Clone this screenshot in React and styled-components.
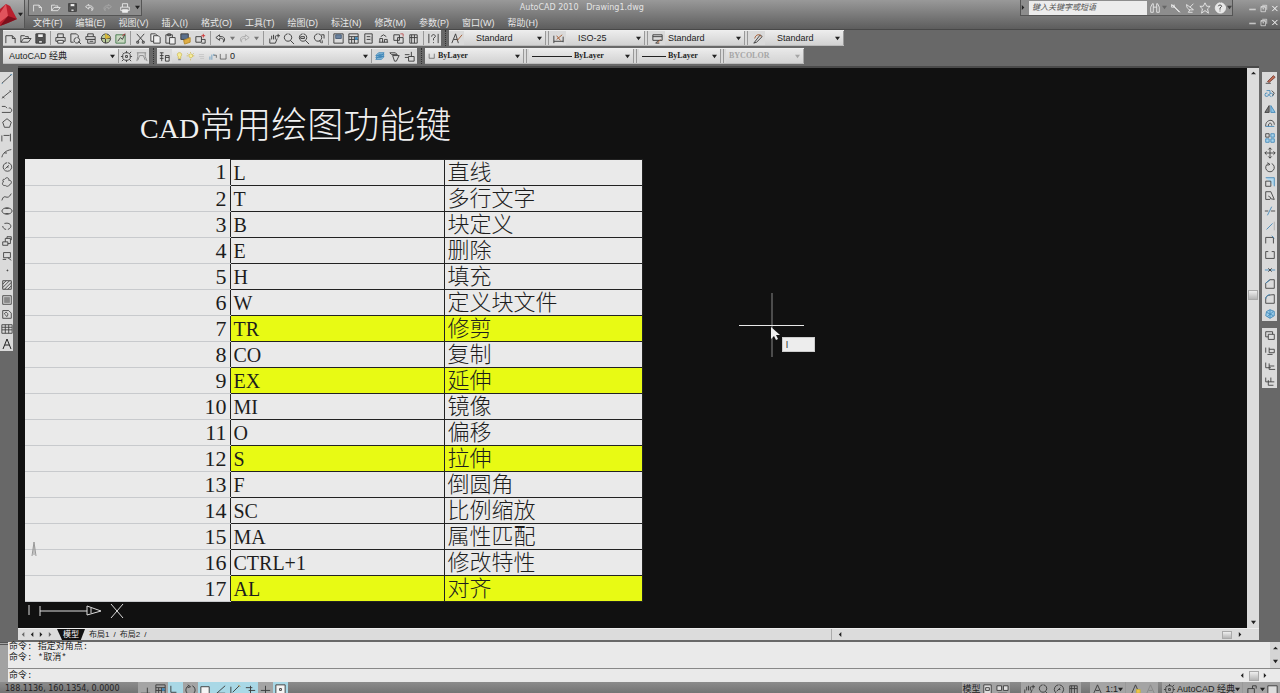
import React from "react";
import styled, { createGlobalStyle, css } from "styled-components";

const Global = createGlobalStyle`
  * { box-sizing: border-box; }
  html, body { margin: 0; height: 100%; overflow: hidden; background: #686868; }
  body { font: 9px/12px "Liberation Sans", "Noto Sans CJK SC", sans-serif; color: #222; }
  button, input, select { font: inherit; color: inherit; margin: 0; padding: 0; border: 0; background: none; border-radius: 0; }
  h1, p, ul { margin: 0; padding: 0; font-weight: normal; list-style: none; }
  svg { display: block; flex: none; }
`;

const K = "#3c3c3c";
const B = "#3f86b8";
const G = "#8a8a8a";
const Y = "#c9b13c";

/* Each glyph is a list of [path, stroke, fill] on a 14 by 14 grid. */
const GLYPHS = {
  fresh: [["M2 12V4H9L12 7V12"], ["M9 4V7H12"]],
  open: [["M2 11V4H6L7 5H10V7M2 11L5 7H13L10 11Z"]],
  save: [["M2 2H12V12H2Z", K, "#555"], ["M4 2H10V6H4Z", K, "#eee"], ["M5 9H9V12H5Z", K, "#ddd"]],
  print: [["M4 6V2H10V6M2 6H12V10H2Z"], ["M4 9H10V12H4Z", K, "#eee"]],
  preview: [["M2 11V2H8L10 4V6M2 11H5"], ["M9 6A3 3 0 1 1 8 6M10 10L13 13"]],
  publish: [["M4 5V2H10V5M2 5H12V8H2Z"], ["M4 8H12V12H4ZM6 10H10", K, "#ddd"]],
  globe: [["M7 2A5 5 0 1 0 8 2M2 7H12M7 2V12", K, "#b9c99a"], ["M7 7V2L12 6Z", Y, "#e0b932"]],
  sheet: [["M2 3H12V12H2Z", "#477a4e", "#c9d8c2"], ["M4 10L7 6L9 8L12 2", K], ["M9 4L12 2", "#b33"]],
  cut: [["M3 2L10 10M11 2L4 10"], ["M3 10H5V12H3ZM9 10H11V12H9Z"]],
  copy: [["M2 2H7L9 4V10H2Z", K, "#eee"], ["M5 4H10L12 6V12H5Z", K, "#eee"]],
  paste: [["M2 3H9V12H2ZM4 2H7V4H4Z"], ["M6 6H12V13H6Z", K, "#eee"]],
  match: [["M2 2H10V8H2Z", K, "#5a6f8c"], ["M5 9L12 6V11L6 13Z", "#b58a2d", "#e0ae45"]],
  block: [["M2 5H8V11H2ZM8 8H12V12H8"], ["M10 2V6M8 4H12", "#c33"]],
  undo: [["M6 3L2 6L6 9V7C9 6 11 8 10 11C13 8 11 4 6 5Z"]],
  redo: [["M8 3L12 6L8 9V7C5 6 3 8 4 11C1 8 3 4 8 5Z", "#aaa"]],
  pan: [["M3 7V12H9L11 7M5 8V4M7 8V3M9 8V4"], ["M12 2V6M10 4H14", K]],
  zoom: [["M6 2A4 4 0 1 0 7 2M9 9L13 13", K]],
  zoomwin: [["M6 2A4 4 0 1 0 7 2M9 9L13 13M4 5H8V7H4Z"]],
  zoomprev: [["M6 2A4 4 0 1 0 7 2M8 9L10 12M10 3H13V7M11 9V12"]],
  props: [["M2 2H12V12H2Z"], ["M4 3H10V7H4Z", "#4b5f79", "#6b83a0"]],
  grid: [["M2 2H12V12H2ZM2 5H12M5 5V12M8 5V12M2 8H12"], ["M9 6H11V8H9Z", B, B]],
  tool: [["M3 2H11V12H3ZM5 5H9M5 8H9"], ["M10 5V10", G]],
  sets: [["M2 11H12M3 11V7H6V11M8 11V8H11V11M4 5L7 3L10 5"]],
  markup: [["M2 3H8V9H2ZM6 6H12V12H6Z"], ["M9 2H12V5", "#b55"]],
  calc: [["M3 3H11V12H3ZM5 3V12M8 3V12M3 6H11"]],
  help: [["M2 2V12M12 2V12"], ["M5 5C5 2 9 2 9 5L7 7V9M7 11V12"]],
  textstyle: [["M2 12L6 2L9 12M4 8H8"], ["M13 3L8 9", "#a65d33"]],
  dimstyle: [["M2 12V4M12 11V5M2 10H12"], ["M5 8L11 3M5 4L9 9", "#a65d33"]],
  tablestyle: [["M2 3H12V9H2ZM2 5H12M8 9L5 12H9"], ["M10 8L7 12", "#a65d33"]],
  leader: [["M3 12L10 3L12 5L6 11Z"], ["M4 7C5 2 10 2 11 5", "#a65d33"]],
  gear: [["M5 3H9L11 5V9L9 11H5L3 9V5ZM7 1V3M7 11V13M1 7H3M11 7H13M3 3L4 4M10 10L12 12M12 2L10 4M2 12L4 10"], ["M6 6H8V8H6Z"]],
  save2: [["M2 3H12M3 3V7L2 12M11 3V7L13 12M5 6H9L11 11M5 6L3 11", G]],
  layers: [["M2 3H6M2 6H6M2 9H6M4 3V12"], ["M8 6H12V12H8ZM8 8H12", K, "#ddd"]],
  stack: [["M3 10H9L12 7H6ZM3 8H9L12 5H6ZM3 6H9L12 3H6Z", B, "#91bfdb"]],
  stack2: [["M2 3H8L10 5H4ZM5 6H12L9 12H7Z"]],
  stack3: [["M2 5H7M2 8H6M9 2V7M6 7H12V12H6Z"]],
  bulb: [["M7 1C3 1 3 5 5 7V10H9V7C11 5 11 1 7 1Z", Y, "#f5ec9a"], ["M5 12H9", K]],
  sun: [["M7 3A3 3 0 1 0 8 3M7 0V2M7 11V13M1 6H3M11 6H13M2 2L4 4M12 2L10 4", Y, "#f5ec9a"]],
  dim: [["M3 4H11M3 7H11M5 10H11", "#bbb"]],
  lock: [["M3 7V12M6 4V12M9 3V6", B], ["M9 5H13V9", K]],
  box: [["M2 3V11H11V3"]],
  line: [["M1 12L12 2"], ["M1 12H2M11 2H13", B]],
  xline: [["M1 12L12 3"], ["M2 10L4 12M10 3L12 5"]],
  poly: [["M1 4H5L7 6M1 11H11C14 9 12 5 9 6"]],
  pent: [["M7 2L12 6L10 12H4L2 6Z"]],
  rect: [["M1 4V11M3 4H10M11 2V11"]],
  arc: [["M1 12C2 7 6 4 12 3M4 7H7"]],
  circle: [["M7 2A5 5 0 1 0 8 2M5 9L9 5M7 7H9"]],
  cloud: [["M4 4C7 0 10 3 9 5C14 5 12 10 10 10C9 13 6 12 5 11C1 12 1 7 3 7C1 5 3 3 4 4Z"]],
  spline: [["M1 11C4 1 7 13 12 3"]],
  ellipse: [["M1 7C2 2 12 2 13 7C12 12 2 12 1 7M5 4H9M5 10H9"]],
  ellarc: [["M4 4C12 2 14 9 8 11M2 7C2 9 4 11 6 11"]],
  insert: [["M2 8H8V12H2ZM5 8V4H11V10H8M7 4V2H12V6"]],
  make: [["M3 3H11V9H3ZM2 11H6M8 9L12 12"]],
  point: [["M7 7H8V8H7Z"]],
  hatch: [["M2 2H12V12H2ZM2 6L6 2M2 10L10 2M4 12L12 4M8 12L12 8"]],
  gradient: [["M2 2H12V12H2Z"], ["M4 4H10V10H4Z", G, "#888"]],
  region: [["M2 3H9L12 6V12H2ZM4 7C5 3 10 6 7 10Z"]],
  table: [["M1 2H13V12H1ZM1 5H13M1 8H13M5 2V12M9 2V12"]],
  erase: [["M2 12H8"], ["M4 10L11 3L13 5L6 11Z", "#774238", "#c06a52"]],
  copyobj: [["M3 3H7V7M8 10A2 2 0 1 1 9 10M4 6A2 2 0 1 0 5 7", B], ["M9 3L12 6L10 9"]],
  mirror: [["M6 3V11H1Z", K, "#777"], ["M8 3V11H13Z", B, "#8fc3e3"]],
  offset: [["M2 11C1 3 12 1 12 9M5 11C5 6 9 6 9 10"], ["M2 11H12", B]],
  array: [["M8 2H12V6H8ZM2 8H6V12H2ZM8 8H12V12H8Z", B, "#a9d3ea"], ["M2 2H6V6H2Z"]],
  move: [["M7 1V13M1 7H13M5 3L7 1L9 3M5 11L7 13L9 11M3 5L1 7L3 9M11 5L13 7L11 9"]],
  rotate: [["M5 3A5 5 0 1 0 9 3M4 2L7 4L4 5"]],
  scale: [["M2 2H12V12", B, "#b5d8ec"], ["M2 6H8V12H2Z"]],
  stretch: [["M2 2H8L12 11L7 10M2 2V11H7M5 7L8 9"]],
  trim: [["M1 7H5M8 7H13"], ["M4 12L9 2", B]],
  extend: [["M3 11L10 4", B], ["M12 2V12", "#aaa"]],
  breakpt: [["M2 11V4H11V11"], ["M9 2L12 5", B]],
  break: [["M5 3H2V11H12V3H9"]],
  join: [["M1 7H13", B], ["M5 5L7 7L5 9M9 5L7 7L9 9"]],
  chamfer: [["M2 12V6L7 2H12V12Z"], ["M2 6L7 2", B]],
  fillet: [["M2 12V7C2 4 4 2 12 2V12Z"], ["M2 7C2 4 4 2 7 2", B]],
  explode: [["M3 4L7 2L12 4V9L7 12L2 9ZM3 5L11 9M11 4L4 10M7 2V12", B, "#9bcce8"]],
  order1: [["M2 2H10V8H2Z"], ["M5 5H12V11H5Z", K, "#ddd"]],
  order2: [["M2 9V3M6 3V9H12V5H6M4 11H10"]],
  order3: [["M2 3V9H8M6 4V11H13M6 7H12"]],
  order4: [["M2 3V8H12M5 6V12H11M8 3V8"]],
  find: [["M2 12V6L4 2H5V12ZM9 12V2H10L12 6V12ZM5 6H9"]],
  wrench: [["M3 3L12 12M4 3L13 12M3 3V6H6V3"]],
  dish: [["M3 3C3 8 6 10 11 9ZM7 6L11 2M7 9L5 12H10"]],
  star: [["M7 1L9 5H13L10 8L11 13L7 10L3 13L4 8L1 5H5Z"]],
  info: [["M7 1A6 6 0 1 0 8 1", "#eee", "#e8e8e8"], ["M5 5C5 3 9 3 9 5L7 7V9M7 10V11"]],
  min: [["M2 8H12"], ["M2 9H12"]],
  restore: [["M3 4H10V12H3ZM5 2H12V9"], ["M3 5H10M6 7H7V8H6Z"]],
  close: [["M3 3L11 11M11 3L3 11"], ["M4 3L12 11M12 3L4 11"]],
  snap: [["M2 11H12M9 5V11"]],
  ortho: [["M2 10H8M2 3V10"]],
  osnap: [["M2 11V4H11V11", K, "#f4f4f4"]],
  angle: [["M12 3L3 11H12"]],
  ucs: [["M2 12V4M2 12H12M4 10L11 3"], ["M10 2L12 4", "#c7892f"]],
  dyn: [["M2 5H9M5 8H12M7 3V11"]],
  plus: [["M2 8H12M7 3V12"]],
  qp: [["M2 2H12V12H2ZM6 6H8V8H6Z", K, "#f4f4f4"]],
  layout: [["M3 2H11V12H3ZM5 5H9V8H5Z", K, "#ddd"]],
  views: [["M1 3H6V8H1ZM8 3H13V8H8ZM2 11H12", K, "#ddd"]],
  person: [["M7 2L3 11M7 2L11 11M5 8H9"]],
  personY: [["M7 2L3 11M7 2L11 11"], ["M8 7H12V11H8Z", Y, "#edc24b"]],
  unlock: [["M2 6H9V12H2ZM7 6V3H11V6"]],
  square: [["M2 3H12V12H2Z", K, "#ddd"]],
};

function Icon({ name, size = 14, tint }) {
  return (
    <svg width={size} height={size} viewBox="0 0 14 14" aria-hidden="true">
      {GLYPHS[name].map(([d, stroke = K, fill = "none"], i) => (
        <path key={i} d={d} stroke={tint || stroke} fill={fill} strokeWidth="1" />
      ))}
    </svg>
  );
}

const ARROWS = { down: "M0 1H6L3 5Z", up: "M0 4H6L3 1Z", left: "M4 0V6L1 3Z", right: "M1 0V6L4 3Z" };
const Arrow = ({ dir = "down", color = "#222" }) => (
  <svg width="5" height="5" viewBox="0 0 6 6" aria-hidden="true"><path d={ARROWS[dir]} fill={color} /></svg>
);

const Shell = styled.div`
  height: 100vh;
  display: grid;
  grid-template-rows: 30px auto minmax(0, 1fr) auto 11px;
  background: #686868;
`;

const Header = styled.header`
  display: flex;
  background: linear-gradient(#999, #7b7b7b 50%, #5d5d5d);
  border-bottom: 1px solid #484848;
`;
const Logo = styled.button`
  width: 25px;
  height: 28px;
  display: flex;
  align-items: center;
  background: linear-gradient(#aaa, #777);
  border-right: 1px solid #555;
`;
const HeaderRows = styled.div`
  flex: 1;
  display: grid;
  grid-template-rows: 16px 13px;
`;
const TitleRow = styled.div`
  display: grid;
  grid-template-columns: 7fr auto 9fr;
  align-items: start;
`;
const Title = styled.h1`
  font: 8px/16px "DejaVu Sans", sans-serif;
  color: #e4e4e4;
  white-space: pre;
`;
const Strip = styled.div`
  display: flex;
  align-items: center;
  height: 16px;
  border: 1px solid #555;
  border-top: 0;
  background: #8d8d8d;
`;
const QuickBar = styled(Strip)`
  width: 114px;
  margin-left: 3px;
  justify-content: space-around;
`;
const HeaderEnd = styled.div`
  display: flex;
  justify-content: flex-end;
  gap: 14px;
`;
const SearchInput = styled.input`
  width: 118px;
  height: 14px;
  margin-left: 3px;
  padding: 0 3px;
  background: #ececec;
  font-size: 8px;
  &::placeholder { color: #555; opacity: 1; font-style: italic; }
`;
const WinControls = styled.div`
  display: flex;
  align-items: center;
  height: ${(p) => (p.$low ? "13px" : "16px")};
  button { width: 11px; display: grid; place-items: center; }
`;
const MenuRow = styled.div`
  display: flex;
  justify-content: space-between;
`;
const Menus = styled.nav`
  display: flex;
  gap: 13px;
  padding-left: 8px;
  button { color: #e8e8e8; line-height: 14px; white-space: nowrap; }
`;

const Bars = styled.div`
  display: grid;
  gap: 2px;
  padding: 0 0 2px 3px;
`;
const BarRow = styled.div`
  display: flex;
  gap: 4px;
  height: 16px;
`;
const Panel = styled.div`
  display: flex;
  align-items: center;
  background: #dadada;
  border-top: 1px solid #eee;
  border-bottom: 1px solid #bbb;
`;
const IconButton = styled.button`
  width: 15px;
  height: 14px;
  display: grid;
  place-items: center;
  ${(p) => p.$narrow && css`width: 9px;`}
  ${(p) => p.$active && css`background: #a9d8e6;`}
`;
const Sep = styled.i`
  width: 1px;
  height: 14px;
  margin: 0 2px;
  background: #999;
`;
const Grip = styled.i`
  width: 3px;
  margin-right: -3px;
  border-left: 1px dotted #333;
`;
const Combo = styled.label`
  display: flex;
  align-items: center;
  gap: 2px;
  width: ${(p) => p.$w}px;
  height: 14px;
  padding: 0 3px 0 ${(p) => p.$indent || 3}px;
  background: linear-gradient(#ececec, #d2d2d2);
  border-right: 1px solid #999;
  opacity: ${(p) => (p.$off ? 0.8 : 1)};
  select {
    flex: 1;
    min-width: 0;
    appearance: none;
    opacity: 1;
    color: ${(p) => (p.$off ? "#999" : "#222")};
    ${(p) => p.$serif && css`font: bold 8px/12px "Liberation Serif", serif;`}
  }
`;
const Sample = styled.i`
  flex: none;
  width: ${(p) => p.$w}px;
  height: 1px;
  background: #222;
`;

const Main = styled.main`
  display: grid;
  grid-template-columns: 18px minmax(0, 1fr) 21px;
  min-height: 0;
`;
const Dock = styled.aside`
  display: flex;
  flex-direction: column;
  align-items: ${(p) => (p.$right ? "center" : "flex-start")};
  gap: 7px;
  padding-top: 6px;
`;
const ToolColumn = styled.div`
  display: grid;
  grid-auto-rows: 1fr;
  width: ${(p) => (p.$left ? 13 : 15)}px;
  height: ${(p) => p.$h}px;
  background: #dadada;
  button { height: 100%; width: 100%; }
`;
const View = styled.section`
  display: grid;
  grid-template: minmax(0, 1fr) 12px / minmax(0, 1fr) 12px;
  border-top: 2px solid #4a4a4a;
`;
const Canvas = styled.div`
  position: relative;
  overflow: hidden;
  background: #111;
  padding-left: 7px;
`;
const Heading = styled.h1`
  margin: 38px 0 10px 115px;
  font: 300 36px/40px "Liberation Serif", "Noto Sans CJK SC", serif;
  color: #f0f0f0;
  white-space: nowrap;
  span { font-size: 28px; }
`;
const KeyTable = styled.table`
  width: 617px;
  table-layout: fixed;
  border-collapse: collapse;
  background: #eaeaea;
  color: #1d1d1d;
  td, th { height: 26px; padding: 0 3px; line-height: 24px; font-weight: 300; white-space: nowrap; }
`;
const Num = styled.th`
  text-align: right;
  border-bottom: 1px solid #c8cacd;
  font-family: "Liberation Serif", serif;
  font-size: 22px;
`;
const Key = styled.td`
  border: 1px solid #222;
  background: ${(p) => (p.$hot ? "#e8fa14" : "#eaeaea")};
  font-family: "Liberation Serif", "Noto Sans CJK SC", serif;
  font-size: ${(p) => (p.$wide ? 22 : 20)}px;
`;
const Ucs = styled.svg`
  position: absolute;
  left: 6px;
  bottom: 4px;
`;
const Cross = styled.svg`
  position: absolute;
  left: 721px;
  top: 225px;
`;
const DynInput = styled.input`
  position: absolute;
  left: 764px;
  top: 269px;
  width: 33px;
  height: 15px;
  padding: 0 3px;
  background: #ededed;
  border: 1px solid #ccc;
`;
const VScroll = styled.div`
  display: flex;
  flex-direction: column;
  align-items: center;
  padding: 3px 0;
  background: #dcdcdc;
`;
const Space = styled.span`
  flex: ${(p) => p.$n || 1};
`;
const Thumb = styled.i`
  width: ${(p) => p.$w}px;
  height: ${(p) => p.$h}px;
  background: linear-gradient(#eee, #b5b5b5);
  border: 1px solid #aaa;
`;
const TabRow = styled.div`
  grid-column: 1 / -1;
  display: flex;
  background: #dcdcdc;
  border-top: 1px solid #eee;
`;
const Tabs = styled.div`
  flex: 2;
  display: flex;
  align-items: center;
  gap: 4px;
  padding-left: 3px;
  font-size: 8px;
  button { line-height: 11px; white-space: nowrap; }
`;
const ModelTab = styled.button`
  padding: 0 6px;
  background: #111;
  color: #fff;
  clip-path: polygon(0 0, 100% 0, 85% 100%, 18% 100%);
`;
const HScroll = styled.div`
  flex: 1;
  display: flex;
  align-items: center;
  gap: 6px;
  padding: 0 16px 0 6px;
  border-left: 1px solid #aaa;
  i { margin-left: auto; }
`;

const Command = styled.section`
  display: grid;
  grid-template-columns: 8px minmax(0, 1fr) 10px;
  grid-template-rows: 26px 14px;
  margin-top: 2px;
  background: #a2a2a2;
`;
const Log = styled.div`
  background: #eaeaea;
  font: 9px/11px "Liberation Mono", "Noto Sans CJK SC", monospace;
  padding-left: 1px;
`;
const Prompt = styled.label`
  grid-column: 2 / 4;
  display: flex;
  align-items: center;
  gap: 4px;
  padding: 0 12px 0 1px;
  border-top: 1px solid #888;
  background: #eaeaea;
  font: 9px/12px "Liberation Mono", "Noto Sans CJK SC", monospace;
  input { flex: 1; }
`;
const Rail = styled.div`
  display: flex;
  flex-direction: column;
  justify-content: space-around;
  align-items: center;
  background: #d5d5d5;
`;
const Handle = styled.i`
  grid-row: 1 / 3;
  border-top: 3px double #555;
`;
const Status = styled.footer`
  display: flex;
  align-items: flex-start;
  overflow: hidden;
  background: linear-gradient(#8c8c8c, #747474);
`;
const Coords = styled.output`
  width: 138px;
  padding-left: 5px;
  font: 8px/14px "DejaVu Sans", sans-serif;
`;
const StatusGroup = styled.div`
  display: flex;
  align-items: center;
  height: 14px;
  background: #a4a4a4;
  margin-left: ${(p) => p.$gap || 0}px;
  white-space: nowrap;
`;

const ROWS = [
  ["L", "直线"], ["T", "多行文字"], ["B", "块定义"], ["E", "删除"], ["H", "填充"], ["W", "定义块文件"],
  ["TR", "修剪", 1], ["CO", "复制"], ["EX", "延伸", 1], ["MI", "镜像"], ["O", "偏移"], ["S", "拉伸", 1],
  ["F", "倒圆角"], ["SC", "比例缩放"], ["MA", "属性匹配"], ["CTRL+1", "修改特性"], ["AL", "对齐", 1],
];
const MENUS = ["文件(F)", "编辑(E)", "视图(V)", "插入(I)", "格式(O)", "工具(T)", "绘图(D)", "标注(N)", "修改(M)", "参数(P)", "窗口(W)", "帮助(H)"];
const STANDARD = "fresh open save | print preview publish globe sheet | cut copy paste match block | undo v redo v | pan zoom zoomwin zoomprev | props grid tool sets markup calc | help".split(" ");
const DRAW = "line xline poly pent rect arc circle cloud spline ellipse ellarc insert make point hatch gradient region table".split(" ");
const MODIFY = "erase copyobj mirror offset array move rotate scale stretch trim extend breakpt break join chamfer fillet explode".split(" ");

const Tool = ({ name, size = 13, tint, ...rest }) => (
  <IconButton aria-label={name} {...rest}><Icon name={name} size={size} tint={tint} /></IconButton>
);

function Tools({ names }) {
  return names.map((n, i) => {
    if (n === "|") return <Sep key={i} />;
    if (n === "v") return <IconButton key={i} $narrow aria-label="list"><Arrow color="#777" /></IconButton>;
    return <Tool key={i} name={n} />;
  });
}

function Select({ w, label, value, indent, serif, off, children }) {
  return (
    <Combo $w={w} $indent={indent} $serif={serif} $off={off}>
      {children}
      <select aria-label={label} disabled={off}><option>{value}</option></select>
      <Arrow color={off ? "#999" : "#222"} />
    </Combo>
  );
}

const Window = ({ low }) => (
  <WinControls $low={low}>
    {["min", "restore", "close"].map((n) => <button key={n} aria-label={n}><Icon name={n} size={9} tint="#f0f0f0" /></button>)}
  </WinControls>
);

export default function App() {
  return (
    <Shell>
      <Global />
      <Header>
        <Logo aria-label="application menu">
          <svg width="18" height="26" viewBox="0 0 18 26">
            <path d="M0 25V8L6 3L10 5L17 18L10 21Z" fill="#b8202e" />
            <path d="M0 12L6 3L8 15L0 21Z" fill="#e0535c" />
            <path d="M8 15L17 18L8 22L0 25Z" fill="#7e0f1c" />
          </svg>
          <Arrow />
        </Logo>
        <HeaderRows>
          <TitleRow>
            <QuickBar>
              {["fresh", "open", "save", "undo"].map((n) => <Tool key={n} name={n} size={11} tint={n === "save" ? undefined : "#eee"} />)}
              <Tool name="redo" size={11} />
              <Tool name="print" size={12} tint="#eee" />
              <Arrow />
            </QuickBar>
            <Title>{"AutoCAD 2010   Drawing1.dwg"}</Title>
            <HeaderEnd>
              <Strip>
                <Arrow dir="right" />
                <SearchInput aria-label="search" placeholder="键入关键字或短语" />
                <Tool name="find" size={12} tint="#eee" />
                <Arrow color="#666" />
                {["wrench", "dish", "star"].map((n) => <Tool key={n} name={n} size={12} tint="#eee" />)}
                <Tool name="info" size={12} />
                <Arrow color="#444" />
              </Strip>
              <Window />
            </HeaderEnd>
          </TitleRow>
          <MenuRow>
            <Menus>{MENUS.map((m) => <button key={m}>{m}</button>)}</Menus>
            <Window low />
          </MenuRow>
        </HeaderRows>
      </Header>

      <Bars>
        <BarRow>
          <Panel><Tools names={STANDARD} /></Panel>
          <Grip />
          <Panel>
            <Tool name="textstyle" />
            <Select w={82} indent={12} label="text style" value="Standard" />
            <Sep /><Tool name="dimstyle" />
            <Select w={79} indent={12} label="dimension style" value="ISO-25" />
            <Sep /><Tool name="tablestyle" />
            <Select w={80} indent={3} label="table style" value="Standard" />
            <Sep /><Tool name="leader" />
            <Select w={79} indent={12} label="multileader style" value="Standard" />
          </Panel>
        </BarRow>
        <BarRow>
          <Panel>
            <Select w={116} indent={6} label="workspace" value="AutoCAD 经典" />
            <Tool name="gear" /><Tool name="save2" />
          </Panel>
          <Grip />
          <Panel>
            <Tool name="layers" />
            <Select w={200} label="layer" value="0">
              <Icon name="bulb" size={9} /><Icon name="sun" size={9} /><Icon name="dim" size={9} />
              <Icon name="lock" size={9} /><Icon name="box" size={9} />
            </Select>
            <Tool name="stack" /><Tool name="stack2" /><Tool name="stack3" />
          </Panel>
          <Grip />
          <Panel>
            <Select w={99} serif label="color" value="ByLayer"><Icon name="box" size={8} /></Select>
            <Sep />
            <Select w={105} serif label="linetype" value="ByLayer"><Sample $w={40} /></Select>
            <Sep />
            <Select w={82} serif label="lineweight" value="ByLayer"><Sample $w={24} /></Select>
            <Sep />
            <Select w={78} serif off label="plot style" value="BYCOLOR" />
          </Panel>
        </BarRow>
      </Bars>

      <Main>
        <Dock>
          <ToolColumn $left $h={279}>
            {DRAW.map((n) => <Tool key={n} name={n} size={12} />)}
            <IconButton aria-label="text"><svg width="12" height="13" viewBox="0 0 12 13"><path d="M2 12L6 2L10 12M4 8H8" fill="none" stroke="#222" /></svg></IconButton>
          </ToolColumn>
        </Dock>
        <View>
          <Canvas>
            <Heading><span>CAD</span>常用绘图功能键</Heading>
            <KeyTable>
              <colgroup><col width="205" /><col width="214" /><col width="198" /></colgroup>
              <tbody>
                {ROWS.map(([key, meaning, hot], i) => (
                  <tr key={key}>
                    <Num scope="row">{i + 1}</Num>
                    <Key $hot={hot}>{key}</Key>
                    <Key $wide $hot={hot}>{meaning}</Key>
                  </tr>
                ))}
              </tbody>
            </KeyTable>
            <Ucs width="104" height="84" viewBox="0 0 104 84" fill="none">
              <path d="M8 16L10 2L12 16M10 6V15" stroke="#999" />
              <path d="M5 65V75M16 66V76M16 71H63M63 66L77 71L63 75ZM67 68V73M87 64L99 78M99 64L87 78" stroke="#ddd" />
            </Ucs>
            <Cross width="66" height="66" viewBox="0 0 66 66">
              <path d="M33 0V64" stroke="#888" />
              <path d="M0 32H65V33H0Z" fill="#e8e8e8" />
              <path d="M32 34V46L35 43L37 47L39 46L37 42H41Z" fill="#eee" />
            </Cross>
            <DynInput aria-label="command entry" defaultValue="l" />
          </Canvas>
          <VScroll><Arrow dir="up" /><Space $n={2} /><Thumb $w={10} $h={10} /><Space $n={3} /><Arrow /></VScroll>
          <TabRow>
            <Tabs>
              <Arrow dir="left" color="#666" /><Arrow dir="left" /><Arrow dir="right" /><Arrow dir="right" color="#666" />
              <ModelTab>模型</ModelTab><button>布局1</button>/<button>布局2</button>/
            </Tabs>
            <HScroll><Arrow dir="left" /><Thumb $w={10} $h={8} /><Arrow dir="right" /></HScroll>
          </TabRow>
        </View>
        <Dock $right>
          <ToolColumn $h={249}>{MODIFY.map((n) => <Tool key={n} name={n} size={12} />)}</ToolColumn>
          <ToolColumn $h={60}>{["order1", "order2", "order3", "order4"].map((n) => <Tool key={n} name={n} size={12} />)}</ToolColumn>
        </Dock>
      </Main>

      <Command>
        <Handle />
        <Log><p>命令: 指定对角点:</p><p>命令: *取消*</p></Log>
        <Rail><Arrow dir="up" /><Arrow /></Rail>
        <Prompt>命令:<input /><Arrow dir="left" /><Thumb $w={10} $h={10} /><Arrow dir="right" /></Prompt>
      </Command>

      <Status>
        <Coords>188.1136, 160.1354, 0.0000</Coords>
        <StatusGroup>
          <Tool name="snap" /><Tool name="grid" /><Tool name="ortho" $active /><Tool name="rotate" />
          <Tool name="osnap" $active /><Tool name="angle" $active /><Tool name="ucs" $active />
          <Tool name="dyn" $active /><Tool name="plus" /><Tool name="qp" $active />
        </StatusGroup>
        <Space />
        <StatusGroup><button>模型</button><Tool name="layout" /><Tool name="views" /></StatusGroup>
        <StatusGroup $gap={11}><Tool name="pan" /><Tool name="zoom" /><Tool name="circle" /><Tool name="calc" /></StatusGroup>
        <StatusGroup $gap={9}><Tool name="person" /><button>1:1</button><Arrow /><Sep /><Tool name="personY" /><Tool name="person" tint="#888" /></StatusGroup>
        <StatusGroup $gap={4}><Tool name="gear" /><button>AutoCAD 经典</button><Arrow /><Sep /><Tool name="unlock" /><Arrow /><Tool name="square" /></StatusGroup>
      </Status>
    </Shell>
  );
}
